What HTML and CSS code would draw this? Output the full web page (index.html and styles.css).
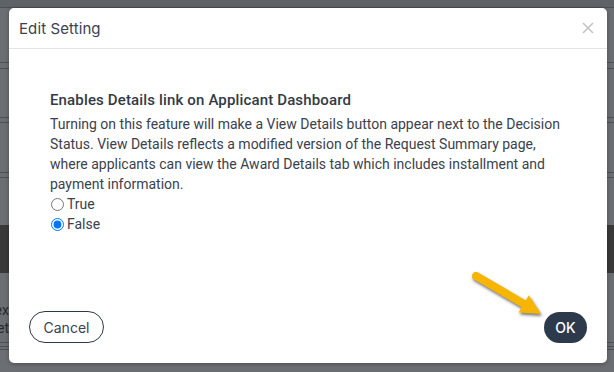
FILE: index.html
```html
<!DOCTYPE html>
<html>
<head>
<meta charset="utf-8">
<link rel="stylesheet" href="styles.css">
</head>
<body>
<div class="page">
  <div class="bg-top"></div>
  <div class="bg-row h54"></div>
  <div class="bg-row h5"></div>
  <div class="bg-row h48"></div>
  <div class="bg-row h4"></div>
  <div class="bg-row h49"></div>
  <div class="bg-row h4"></div>
  <div class="bg-gap"></div>
  <div class="bg-dark"></div>
  <div class="bg-text">
    <div class="bg-word"><span>Index</span></div>
    <div class="bg-word"><span>Set</span></div>
  </div>
  <div class="bg-row h3"></div>
  <div class="bg-row h2"></div>
</div>

<div class="modal">
  <div class="modal-header">
    <div class="modal-title">Edit Setting</div>
    <div class="close">
      <svg width="12" height="12" viewBox="0 0 12 12"><path d="M1 1L11 11M11 1L1 11" stroke="#c4c4c4" stroke-width="1.6" fill="none"/></svg>
    </div>
  </div>
  <div class="modal-body">
    <div class="setting-name">Enables Details link on Applicant Dashboard</div>
    <p class="setting-desc">Turning on this feature will make a View Details button appear next to the Decision Status. View Details reflects a modified version of the Request Summary page, where applicants can view the Award Details tab which includes installment and payment information.</p>
    <label class="opt"><input type="radio" name="v">True</label>
    <label class="opt"><input type="radio" name="v" checked>False</label>
  </div>
  <div class="modal-footer">
    <button class="btn btn-cancel">Cancel</button>
    <button class="btn btn-ok">OK</button>
  </div>
</div>

<svg class="arrow" width="90" height="60" viewBox="0 0 90 60">
  <line x1="11" y1="11" x2="59" y2="39" stroke="#f6b500" stroke-width="8" stroke-linecap="round"/>
  <polygon points="76,49 53.6,47.5 63.8,30.3" fill="#f6b500"/>
</svg>
</body>
</html>
```

FILE: styles.css
```css
html, body {
  margin: 0;
  padding: 0;
}
body {
  width: 614px;
  height: 372px;
  overflow: hidden;
  background: #6b6e72;
  position: relative;
  font-family: Roboto, "Liberation Sans", sans-serif;
}
.page {
  display: flex;
  flex-direction: column;
}
.bg-top {
  height: 7px;
  background: #5f6266;
  border-bottom: 1px solid #4c4f53;
}
.bg-row {
  border-bottom: 1px solid #4e5155;
}
.h54 { height: 54px; }
.h5 { height: 5px; }
.h48 { height: 48px; }
.h4 { height: 4px; }
.h49 { height: 49px; }
.h3 { height: 3px; }
.h2 { height: 2px; }
.bg-gap { height: 47px; }
.bg-dark {
  height: 48px;
  background: #39393a;
}
.bg-text {
  padding-top: 28px;
  height: 41px;
  border-bottom: 1px solid #4e5155;
}
.bg-word {
  width: 9px;
  overflow: hidden;
  display: flex;
  justify-content: flex-end;
  white-space: nowrap;
  font-size: 14px;
  line-height: 18px;
  color: #28292b;
}

.modal {
  position: absolute;
  left: 9px;
  top: 8px;
  width: 598px;
  height: 355px;
  background: #fff;
  border-radius: 5px;
  box-shadow: 0 1px 4px rgba(0, 0, 0, 0.3);
  display: flex;
  flex-direction: column;
}
.modal-header {
  height: 40px;
  border-bottom: 1px solid #e4e4e4;
  display: flex;
  align-items: center;
  justify-content: space-between;
  padding: 0 13px 0 10px;
}
.modal-title {
  font-family: Inter, "Open Sans", sans-serif;
  font-size: 15px;
  color: #3a4150;
  font-weight: 400;
  letter-spacing: 0.1px;
}
.close {
  display: flex;
  width: 12px;
  height: 12px;
}
.modal-body {
  flex: 1;
  padding: 41px 41px 0 41px;
  color: #3b414c;
  font-size: 14px;
  line-height: 20px;
}
.setting-name {
  font-size: 15px;
  font-weight: 500;
  letter-spacing: 0.15px;
  color: #343a44;
  margin-bottom: 4px;
}
.setting-desc {
  margin: 0;
}
.opt {
  display: flex;
  align-items: center;
  height: 20px;
}
.opt input {
  margin: 0 3px 0 1px;
  width: 13px;
  height: 13px;
}
.modal-footer {
  display: flex;
  justify-content: space-between;
  align-items: center;
  padding: 0 20px 20px 20px;
}
.btn {
  font-family: Inter, "Open Sans", sans-serif;
  font-size: 14px;
  height: 32px;
  border-radius: 16px;
  padding: 0;
  cursor: pointer;
}
.btn-cancel {
  width: 75px;
  background: #fff;
  border: 1px solid #2e3948;
  color: #3a4150;
}
.btn-ok {
  width: 43px;
  height: 31px;
  background: #2c3a4b;
  border: none;
  color: #fff;
  font-weight: 500;
}
.arrow {
  position: absolute;
  left: 465px;
  top: 265px;
  filter: drop-shadow(1px 2px 1.5px rgba(0, 0, 0, 0.55));
}
```
